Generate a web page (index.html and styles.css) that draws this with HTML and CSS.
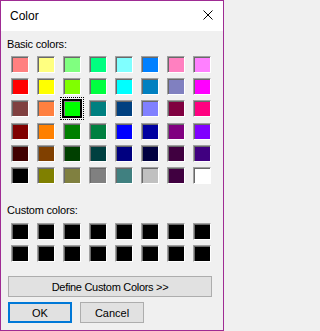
FILE: index.html
```html
<!DOCTYPE html>
<html lang="en">
<head>
<meta charset="utf-8">
<title>Color</title>
<link rel="stylesheet" href="styles.css">
</head>
<body>
<div class="window">
  <div class="titlebar">
    <span class="title">Color</span>
    <svg class="close" viewBox="0 0 10 10" width="10" height="10" aria-label="Close">
      <path d="M0.5 0.5 L9.5 9.5 M9.5 0.5 L0.5 9.5" stroke="#000" stroke-width="1" fill="none"/>
    </svg>
  </div>
  <div class="content">
    <div class="label label-basic">Basic colors:</div>
    <div class="grid grid-basic">
      <div class="swatch" style="background:#ff8080"></div>
      <div class="swatch" style="background:#ffff80"></div>
      <div class="swatch" style="background:#80ff80"></div>
      <div class="swatch" style="background:#00ff80"></div>
      <div class="swatch" style="background:#80ffff"></div>
      <div class="swatch" style="background:#0080ff"></div>
      <div class="swatch" style="background:#ff80c0"></div>
      <div class="swatch" style="background:#ff80ff"></div>

      <div class="swatch" style="background:#ff0000"></div>
      <div class="swatch" style="background:#ffff00"></div>
      <div class="swatch" style="background:#80ff00"></div>
      <div class="swatch" style="background:#00ff40"></div>
      <div class="swatch" style="background:#00ffff"></div>
      <div class="swatch" style="background:#0080c0"></div>
      <div class="swatch" style="background:#8080c0"></div>
      <div class="swatch" style="background:#ff00ff"></div>

      <div class="swatch" style="background:#804040"></div>
      <div class="swatch" style="background:#ff8040"></div>
      <div class="swatch swatch-selected" style="background:#00ff00"></div>
      <div class="swatch" style="background:#008080"></div>
      <div class="swatch" style="background:#004080"></div>
      <div class="swatch" style="background:#8080ff"></div>
      <div class="swatch" style="background:#800040"></div>
      <div class="swatch" style="background:#ff0080"></div>

      <div class="swatch" style="background:#800000"></div>
      <div class="swatch" style="background:#ff8000"></div>
      <div class="swatch" style="background:#008000"></div>
      <div class="swatch" style="background:#008040"></div>
      <div class="swatch" style="background:#0000ff"></div>
      <div class="swatch" style="background:#0000a0"></div>
      <div class="swatch" style="background:#800080"></div>
      <div class="swatch" style="background:#8000ff"></div>

      <div class="swatch" style="background:#400000"></div>
      <div class="swatch" style="background:#804000"></div>
      <div class="swatch" style="background:#004000"></div>
      <div class="swatch" style="background:#004040"></div>
      <div class="swatch" style="background:#000080"></div>
      <div class="swatch" style="background:#000040"></div>
      <div class="swatch" style="background:#400040"></div>
      <div class="swatch" style="background:#400080"></div>

      <div class="swatch" style="background:#000000"></div>
      <div class="swatch" style="background:#808000"></div>
      <div class="swatch" style="background:#808040"></div>
      <div class="swatch" style="background:#808080"></div>
      <div class="swatch" style="background:#408080"></div>
      <div class="swatch" style="background:#c0c0c0"></div>
      <div class="swatch" style="background:#400040"></div>
      <div class="swatch" style="background:#ffffff"></div>
    </div>

    <div class="label label-custom">Custom colors:</div>
    <div class="grid grid-custom">
      <div class="swatch swatch-custom"></div>
      <div class="swatch swatch-custom"></div>
      <div class="swatch swatch-custom"></div>
      <div class="swatch swatch-custom"></div>
      <div class="swatch swatch-custom"></div>
      <div class="swatch swatch-custom"></div>
      <div class="swatch swatch-custom"></div>
      <div class="swatch swatch-custom"></div>
      <div class="swatch swatch-custom"></div>
      <div class="swatch swatch-custom"></div>
      <div class="swatch swatch-custom"></div>
      <div class="swatch swatch-custom"></div>
      <div class="swatch swatch-custom"></div>
      <div class="swatch swatch-custom"></div>
      <div class="swatch swatch-custom"></div>
      <div class="swatch swatch-custom"></div>
    </div>

    <button class="btn btn-define" type="button">Define Custom Colors &gt;&gt;</button>
    <div class="btn-row">
      <button class="btn btn-ok" type="button">OK</button>
      <button class="btn btn-cancel" type="button">Cancel</button>
    </div>
  </div>
</div>
</body>
</html>
```

FILE: styles.css
```css
html, body {
  margin: 0;
  padding: 0;
}

html {
  background: #f0f0f0;
}

body {
  font-family: "Liberation Sans", Arial, sans-serif;
  font-size: 11px;
  color: #000;
  background: #f0f0f0;
}

.window {
  width: 224px;
  height: 331px;
  box-sizing: border-box;
  border: 1px solid #9f2b93;
  background: #f0f0f0;
  display: flex;
  flex-direction: column;
}

.titlebar {
  height: 30px;
  flex: none;
  background: #fff;
  display: flex;
  justify-content: space-between;
  align-items: flex-start;
  padding: 0 10px 0 9px;
}

.title {
  font-size: 12px;
  line-height: 30px;
}

.close {
  display: block;
  width: 10px;
  height: 10px;
  margin-top: 9px;
}

.content {
  padding: 0 0 0 7px;
}

.label {
  line-height: 13px;
  margin-left: -1px;
  letter-spacing: -0.2px;
}

.label-basic {
  margin-top: 7px;
}

.label-custom {
  margin-top: 20px;
}

.grid {
  display: grid;
  grid-template-columns: repeat(8, 18px);
  column-gap: 8px;
  margin-left: 3px;
  align-items: start;
}

.grid-basic {
  margin-top: 5px;
  grid-template-rows: 22px 22px 23px 22px 22px 17px;
}

.grid-custom {
  margin-top: 6px;
  grid-template-rows: 22px 17px;
}

.swatch {
  box-sizing: border-box;
  width: 18px;
  height: 17px;
  border-style: solid;
  border-width: 1px;
  border-color: #a0a0a0 #fff #fff #a0a0a0;
  box-shadow: inset 1px 1px 0 #696969;
}

.swatch-custom {
  background: #000;
}

.swatch-selected {
  border-color: #000;
  box-shadow: 0 0 0 1px #000, inset 1px 1px 0 #808080;
  outline: 1px dotted #000;
  outline-offset: 2px;
}

.btn {
  box-sizing: border-box;
  height: 21px;
  margin: 0;
  padding: 0;
  background: #e1e1e1;
  border: 1px solid #adadad;
  font-family: "Liberation Sans", Arial, sans-serif;
  font-size: 11px;
  color: #000;
  display: flex;
  align-items: center;
  justify-content: center;
}

.btn-define {
  width: 204px;
  margin-top: 14px;
  letter-spacing: -0.3px;
}

.btn-row {
  display: flex;
  gap: 8px;
  margin-top: 5px;
}

.btn-ok,
.btn-cancel {
  width: 64px;
}

.btn-ok {
  border: 2px solid #0078d7;
}
```
